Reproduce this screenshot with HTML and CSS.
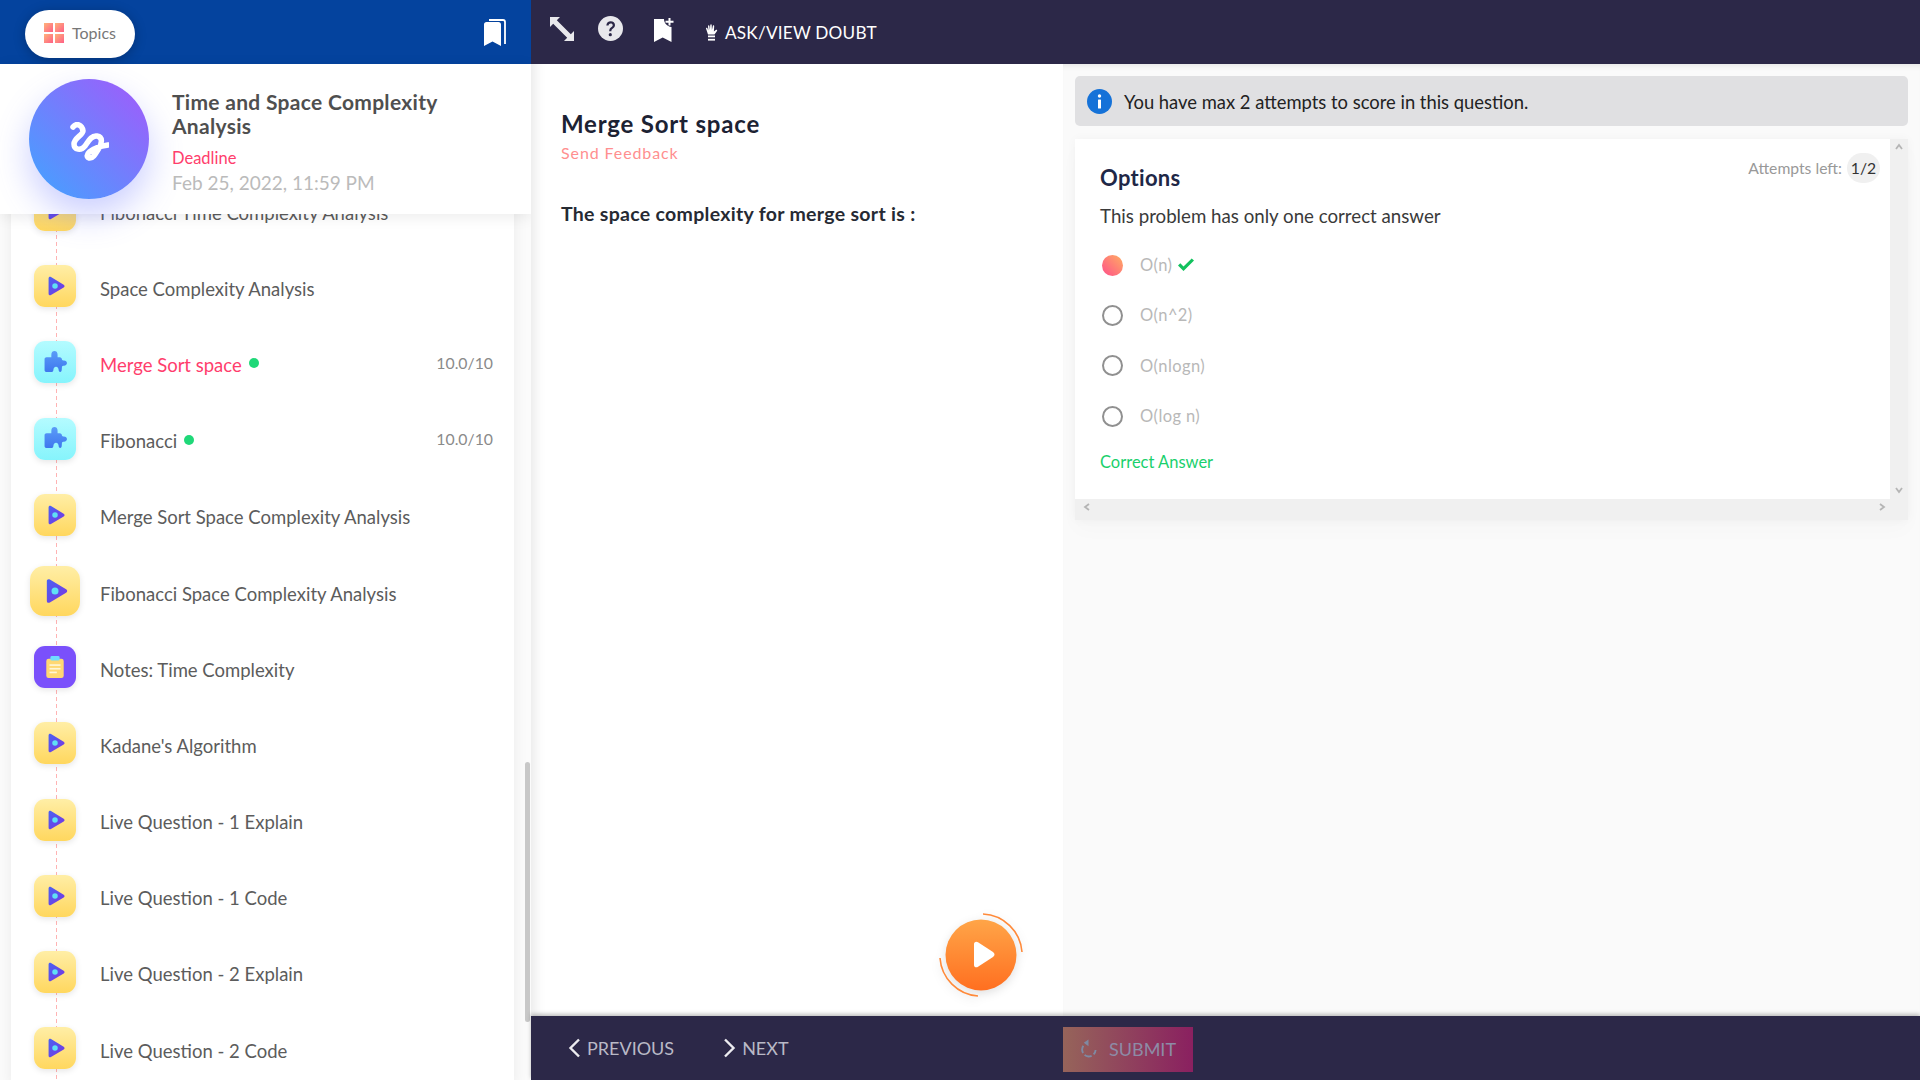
FILE: index.html
```html
<!DOCTYPE html>
<html lang="en">
<head>
<meta charset="UTF-8">
<title>Merge Sort space</title>
<link rel="stylesheet" href="styles.css">
</head>
<body>

<svg class="defs" width="0" height="0">
  <defs>
    <linearGradient id="playFill" x1="0" y1="0" x2="1" y2="1">
      <stop offset="0" stop-color="#4a62f2"/>
      <stop offset="1" stop-color="#7a35e0"/>
    </linearGradient>
    <linearGradient id="puzzleFill" x1="0" y1="0" x2="0" y2="1">
      <stop offset="0" stop-color="#5a9cf8"/>
      <stop offset="1" stop-color="#3f78ee"/>
    </linearGradient>
    <linearGradient id="gridFill" x1="0" y1="0" x2="1" y2="1">
      <stop offset="0" stop-color="#ffb37a"/>
      <stop offset="1" stop-color="#ff5f86"/>
    </linearGradient>
    <symbol id="iconPlay" viewBox="0 0 24 24">
      <path d="M5 3.5 C5 2 6.4 1.4 7.600 2.200 L21.500 10.600 C22.800 11.400 22.800 12.800 21.500 13.600 L7.600 21.800 C6.400 22.600 5 22 5 20.500 Z" fill="url(#playFill)"/>
      <circle cx="12" cy="12" r="3" fill="#5fe0f5"/>
    </symbol>
    <symbol id="iconPuzzle" viewBox="0 0 24 24">
      <path d="M8 4.500 C8 2 9.500 1 11 1 C12.500 1 14 2 14 4.500 L14 7 L16 7 C17.500 7 18 8 18.200 9 C18.500 9.800 19 10 20 10 C22 10 23 11.200 23 12.500 C23 13.800 22 15 20 15 C19 15 18.500 15.200 18.200 16 L18 19 C18 20 17.500 21 16.500 21 C15.500 21 15 20.200 15 19 C15 17.500 14 16 12.500 16 C11 16 10 17.500 10 19 C10 20.200 9.500 21 8.500 21 L3 21 C2 21 1.500 20.300 1.500 19.300 L1.500 9 C1.500 8 2 7 3.500 7 L8 7 Z" fill="url(#puzzleFill)"/>
    </symbol>
    <symbol id="iconNotes" viewBox="0 0 24 24">
      <rect x="2.500" y="3" width="19" height="21" rx="2.500" fill="#ffd873"/>
      <rect x="7" y="0" width="10" height="5" rx="1.500" fill="#6fdcff"/>
      <rect x="6" y="9" width="12" height="1.800" fill="#fff6d8"/>
      <rect x="6" y="13" width="12" height="1.800" fill="#fff6d8"/>
      <rect x="6" y="17" width="8" height="1.800" fill="#fff6d8"/>
    </symbol>
  </defs>
</svg>

<div class="app">

  <aside class="sidebar">
    <div class="sideTop">
      <button class="topicsBtn">
        <svg class="gridIcon" viewBox="0 0 20 20">
          <rect x="0" y="0" width="9" height="9" fill="url(#gridFill)"/>
          <rect x="11" y="0" width="9" height="9" fill="url(#gridFill)"/>
          <rect x="0" y="11" width="9" height="9" fill="url(#gridFill)"/>
          <rect x="11" y="11" width="9" height="9" fill="url(#gridFill)"/>
        </svg>
        Topics
      </button>
      <svg class="bookmarksIcon" viewBox="0 0 22 27">
        <path d="M0 5.500 C0 4 1 3 2.500 3 L14.500 3 C16 3 17 4 17 5.500 L17 27 L8.500 22.500 L0 27 Z" fill="#fff"/>
        <path d="M5 1 L19 1 C20.200 1 21 1.800 21 3 L21 25" fill="none" stroke="#fff" stroke-width="1.800"/>
      </svg>
    </div>

    <div class="courseHead">
      <div class="courseLogo">
        <svg viewBox="0 0 40 40" width="40" height="40">
          <path d="M4 5 C7 1 13 2 14 9 C14 13 5 16 5 22 C5 28 12 29 16 24 C19 20 22 13 28 14 C34 15 33 21 30 26 C27 31 24 37 20 36 C15 34 20 26 39 23" fill="none" stroke="#fff" stroke-width="5.500" stroke-linecap="round" stroke-linejoin="round"/>
        </svg>
      </div>
      <div class="courseInfo">
        <h2>Time and Space Complexity Analysis</h2>
        <div class="deadlineLabel">Deadline</div>
        <div class="deadlineDate">Feb 25, 2022, 11:59 PM</div>
      </div>
    </div>

    <div class="listWrap">
      <ul class="topicList">
        <li class="topic"><span class="tIcon yellow"><svg><use href="#iconPlay"/></svg></span><span class="tName">Fibonacci Time Complexity Analysis</span></li>
        <li class="topic"><span class="tIcon yellow"><svg><use href="#iconPlay"/></svg></span><span class="tName">Space Complexity Analysis</span></li>
        <li class="topic active"><span class="tIcon cyan"><svg><use href="#iconPuzzle"/></svg></span><span class="tName">Merge Sort space</span><i class="doneDot"></i><span class="tScore">10.0/10</span></li>
        <li class="topic"><span class="tIcon cyan"><svg><use href="#iconPuzzle"/></svg></span><span class="tName">Fibonacci</span><i class="doneDot"></i><span class="tScore">10.0/10</span></li>
        <li class="topic"><span class="tIcon yellow"><svg><use href="#iconPlay"/></svg></span><span class="tName">Merge Sort Space Complexity Analysis</span></li>
        <li class="topic"><span class="tIcon yellow big"><svg><use href="#iconPlay"/></svg></span><span class="tName">Fibonacci Space Complexity Analysis</span></li>
        <li class="topic"><span class="tIcon purple"><svg><use href="#iconNotes"/></svg></span><span class="tName">Notes: Time Complexity</span></li>
        <li class="topic"><span class="tIcon yellow"><svg><use href="#iconPlay"/></svg></span><span class="tName">Kadane's Algorithm</span></li>
        <li class="topic"><span class="tIcon yellow"><svg><use href="#iconPlay"/></svg></span><span class="tName">Live Question - 1 Explain</span></li>
        <li class="topic"><span class="tIcon yellow"><svg><use href="#iconPlay"/></svg></span><span class="tName">Live Question - 1 Code</span></li>
        <li class="topic"><span class="tIcon yellow"><svg><use href="#iconPlay"/></svg></span><span class="tName">Live Question - 2 Explain</span></li>
        <li class="topic"><span class="tIcon yellow"><svg><use href="#iconPlay"/></svg></span><span class="tName">Live Question - 2 Code</span></li>
      </ul>
      <div class="listScroll"></div>
    </div>
  </aside>

  <main class="main">
    <header class="topBar">
      <svg class="barIcon expand" viewBox="0 0 24 24">
        <path d="M0 0 L10 0 L6.800 3.200 L20.800 17.200 L24 14 L24 24 L14 24 L17.200 20.800 L3.200 6.800 L0 10 Z" fill="#e8e8ec"/>
      </svg>
      <svg class="barIcon help" viewBox="0 0 25 25">
        <circle cx="12.500" cy="12.500" r="12.500" fill="#e8e8ec"/>
        <path d="M8.300 9.500 C8.500 6.800 10.300 5.300 12.700 5.300 C15.200 5.300 17 6.900 17 9.100 C17 11 15.900 11.900 14.700 12.700 C13.700 13.400 13.400 13.900 13.400 15.300 L11.200 15.300 C11.200 13.200 11.800 12.300 13.200 11.300 C14.200 10.600 14.700 10.100 14.700 9.200 C14.700 8.200 13.900 7.500 12.700 7.500 C11.500 7.500 10.700 8.300 10.500 9.500 Z" fill="#2c2848"/>
        <circle cx="12.300" cy="18.700" r="1.600" fill="#2c2848"/>
      </svg>
      <svg class="barIcon mark" viewBox="0 0 20 24">
        <path d="M0 1 L10 1 C10 5 13 8.500 17.500 9 L17.500 24 L8.700 19.500 L0 24 Z" fill="#fff"/>
        <path d="M16.500 0 L16.500 2.700 L19.500 2.700 L19.500 4.700 L16.500 4.700 L16.500 7.500 L14.500 7.500 L14.500 4.700 L11.500 4.700 L11.500 2.700 L14.500 2.700 L14.500 0 Z" fill="#fff"/>
      </svg>
      <span class="askDoubt">
        <svg class="handIcon" viewBox="0 0 14 17">
          <path d="M2.500 9 L1 4.500 C0.800 3.700 2 3.300 2.300 4.100 L3.300 6.500 L3 2 C3 1.100 4.300 1.100 4.400 2 L4.900 6 L5.300 1 C5.400 0 6.700 0 6.700 1 L6.900 6 L7.900 1.800 C8.100 1 9.300 1.200 9.200 2 L8.900 7.500 L10.800 6 C11.600 5.300 12.700 6.200 12 7 L9.500 10.500 L3 10.500 Z" fill="#fff"/>
          <rect x="3" y="11.500" width="7" height="1.800" fill="#fff"/>
          <rect x="3" y="14.800" width="7" height="1.800" fill="#fff"/>
        </svg>
        ASK/VIEW DOUBT
      </span>
    </header>

    <div class="content">
      <section class="question">
        <h1>Merge Sort space</h1>
        <a class="feedback">Send Feedback</a>
        <p class="qText">The space complexity for merge sort is :</p>
        <div class="playBtn">
          <svg viewBox="0 0 90 90" width="90" height="90">
            <defs>
              <linearGradient id="orangeFill" x1="0" y1="0" x2="0" y2="1">
                <stop offset="0" stop-color="#ffa548"/>
                <stop offset="1" stop-color="#ff6f20"/>
              </linearGradient>
            </defs>
            <circle cx="45" cy="45" r="35.500" fill="url(#orangeFill)"/>
            <path d="M47 4 A41 41 0 0 1 86 42" fill="none" stroke="#ff8a3a" stroke-width="1.600"/>
            <path d="M4 48 A41 41 0 0 0 42 86" fill="none" stroke="#ff8a3a" stroke-width="1.600"/>
            <path d="M38 34 C38 32 40 31 42 32.200 L57 42 C59 43.400 59 45.600 57 47 L42 56.800 C40 58 38 57 38 55 Z" fill="#fff"/>
          </svg>
        </div>
      </section>

      <section class="answer">
        <div class="notice">
          <svg class="infoIcon" viewBox="0 0 25 25">
            <circle cx="12.500" cy="12.500" r="12.500" fill="#1572d8"/>
            <circle cx="12.500" cy="7" r="1.700" fill="#fff"/>
            <rect x="11" y="10.500" width="3" height="9" rx="0.500" fill="#fff"/>
          </svg>
          You have max 2 attempts to score in this question.
        </div>

        <div class="optionsScroll">
          <div class="optionsCard">
            <div class="attempts">Attempts left: <span class="attemptsBadge">1/2</span></div>
            <h3>Options</h3>
            <p class="hint">This problem has only one correct answer</p>
            <div class="option"><i class="radio picked"></i><span>O(n)</span>
              <svg class="tick" viewBox="0 0 18 14"><path d="M1 7.500 L6.500 13 L17 2.500 L14.700 0.500 L6.500 8.500 L3.300 5.300 Z" fill="#12c25e"/></svg>
            </div>
            <div class="option"><i class="radio"></i><span>O(n^2)</span></div>
            <div class="option"><i class="radio"></i><span>O(nlogn)</span></div>
            <div class="option"><i class="radio"></i><span>O(log n)</span></div>
            <div class="verdict">Correct Answer</div>
          </div>
          <svg class="arrow up" viewBox="0 0 8 6"><path d="M1 5 L4 1 L7 5" fill="none" stroke="#b5b5b5" stroke-width="1.800"/></svg>
          <svg class="arrow down" viewBox="0 0 8 6"><path d="M1 1 L4 5 L7 1" fill="none" stroke="#b5b5b5" stroke-width="1.800"/></svg>
          <svg class="arrow left" viewBox="0 0 6 8"><path d="M5 1 L1 4 L5 7" fill="none" stroke="#b5b5b5" stroke-width="1.800"/></svg>
          <svg class="arrow right" viewBox="0 0 6 8"><path d="M1 1 L5 4 L1 7" fill="none" stroke="#b5b5b5" stroke-width="1.800"/></svg>
        </div>
      </section>
    </div>

    <footer class="bottomBar">
      <div class="navBtns">
        <a class="navBtn">
          <svg viewBox="0 0 13 20" width="13" height="20"><path d="M11 1.500 L2.500 10 L11 18.500" fill="none" stroke="#ececf0" stroke-width="2.400"/></svg>
          PREVIOUS
        </a>
        <a class="navBtn">
          <svg viewBox="0 0 13 20" width="13" height="20"><path d="M2 1.500 L10.500 10 L2 18.500" fill="none" stroke="#ececf0" stroke-width="2.400"/></svg>
          NEXT
        </a>
      </div>
      <button class="submitBtn">
        <svg viewBox="0 0 18 20" width="17" height="20">
          <path d="M3.500 6.500 A7.500 7.500 0 0 0 9 18 A7.500 7.500 0 0 0 16.500 11" fill="none" stroke="#7f8aa3" stroke-width="2" stroke-dasharray="8 2.500"/>
          <path d="M9 0 L9 7 L4 3.500 Z" fill="#7f8aa3"/>
        </svg>
        SUBMIT
      </button>
    </footer>
  </main>

</div>
</body>
</html>
```

FILE: styles.css
```css
* {
  box-sizing: border-box;
}
html, body {
  height: 100%;
  margin: 0;
  overflow: hidden;
}
body {
  font-family: "Lato", "Noto Sans", sans-serif;
  background-color: #fff;
  color: #333;
}
.defs {
  display: block;
  height: 0;
}
.app {
  display: grid;
  grid-template-columns: 531px 1fr;
  height: 1080px;
}

/* sidebar */
.sidebar {
  display: flex;
  flex-direction: column;
  height: 1080px;
  overflow: hidden;
}
.sideTop {
  flex: none;
  height: 64px;
  display: flex;
  align-items: center;
  justify-content: space-between;
  padding: 0 25px;
  background-color: #04439e;
}
.topicsBtn {
  display: flex;
  align-items: center;
  gap: 8px;
  width: 110px;
  height: 48px;
  margin-top: 4px;
  padding: 0 0 3px 19px;
  border: none;
  border-radius: 24px;
  background-color: #fff;
  font: 16px "Lato", sans-serif;
  color: #777;
  box-shadow: 0 2px 12px rgba(0, 0, 0, .25);
}
.gridIcon {
  width: 20px;
  height: 20px;
}
.bookmarksIcon {
  width: 22px;
  height: 27px;
}
.courseHead {
  position: relative;
  z-index: 2;
  flex: none;
  height: 150px;
  display: flex;
  align-items: center;
  gap: 23px;
  padding-left: 29px;
  background-color: #fff;
  box-shadow: 0 3px 14px rgba(0, 0, 0, .08);
}
.courseLogo {
  flex: none;
  width: 120px;
  height: 120px;
  display: flex;
  align-items: center;
  justify-content: center;
  border-radius: 50%;
  background: linear-gradient(45deg, #4a9dff 10%, #9a60fb 90%);
  box-shadow: 0 16px 34px rgba(96, 110, 255, .33);
}
.courseLogo svg {
  margin-top: 6px;
}
.courseInfo {
  width: 300px;
  padding-top: 7px;
}
.courseInfo h2 {
  margin: 0;
  font-size: 21px;
  line-height: 24px;
  font-weight: 700;
  letter-spacing: .3px;
  color: #4f4f4f;
}
.deadlineLabel {
  margin-top: 10px;
  font-size: 16.500px;
  line-height: 20px;
  color: #ff3d6c;
}
.deadlineDate {
  margin-top: 3px;
  font-size: 19px;
  line-height: 24px;
  color: #bbb;
}
.listWrap {
  position: relative;
  flex: 1;
  min-height: 0;
  overflow: hidden;
  background-color: #fbfbfb;
}
.topicList {
  list-style: none;
  width: 503px;
  margin: -42px 0 0 11px;
  padding: 0;
  background-color: #fff;
  background-image: repeating-linear-gradient(#ffb3b3 0 4px, transparent 4px 7px);
  background-size: 1px 100%;
  background-position: 45px 0;
  background-repeat: no-repeat;
  box-shadow: 0 0 14px rgba(0, 0, 0, .07);
}
.topic {
  height: 76.2px;
  display: flex;
  align-items: center;
}
.tIcon {
  flex: none;
  width: 42px;
  height: 42px;
  margin-left: 23px;
  margin-right: 24px;
  display: flex;
  align-items: center;
  justify-content: center;
  border-radius: 11px;
  box-shadow: 0 2px 6px rgba(0, 0, 0, .1);
}
.tIcon svg {
  width: 22px;
  height: 22px;
}
.tIcon.big {
  width: 50px;
  height: 50px;
  margin-left: 19px;
  margin-right: 20px;
  border-radius: 14px;
}
.tIcon.big svg {
  width: 28px;
  height: 28px;
}
.tIcon.yellow {
  background: linear-gradient(#ffeea6, #ffd75e);
}
.tIcon.cyan {
  background: linear-gradient(#b4fbff, #86f4fc);
}
.tIcon.cyan svg {
  width: 25px;
  height: 25px;
}
.tIcon.purple {
  background-color: #7a50fb;
}
.tName {
  padding-top: 5px;
  font-size: 18.500px;
  color: #5c5c5c;
}
.topic.active .tName {
  color: #ff3d6c;
}
.doneDot {
  width: 10px;
  height: 10px;
  margin-left: 7px;
  margin-top: 2px;
  border-radius: 50%;
  background-color: #1fd878;
}
.tScore {
  margin-left: auto;
  margin-right: 21px;
  font-size: 15.800px;
  color: #8a8a8a;
}
.listScroll {
  position: absolute;
  right: 1px;
  top: 548px;
  width: 5px;
  height: 260px;
  border-radius: 3px;
  background-color: #c8c8c8;
}

/* main part */
.main {
  display: flex;
  flex-direction: column;
  height: 1080px;
}
.topBar {
  flex: none;
  height: 64px;
  display: flex;
  align-items: center;
  padding-left: 19px;
  background-color: #2c2848;
}
.barIcon {
  flex: none;
}
.barIcon.expand {
  width: 24px;
  height: 24px;
  margin-right: 24px;
  margin-top: -6px;
}
.barIcon.help {
  width: 25px;
  height: 25px;
  margin-right: 31px;
  margin-top: -7px;
}
.barIcon.mark {
  width: 20px;
  height: 24px;
  margin-right: 31px;
  margin-top: -5px;
}
.askDoubt {
  display: flex;
  align-items: center;
  gap: 6px;
  font-size: 17.200px;
  letter-spacing: .2px;
  color: #fff;
}
.handIcon {
  width: 14px;
  height: 17px;
}
.content {
  flex: 1;
  min-height: 0;
  display: grid;
  grid-template-columns: 532px 1fr;
}
.question {
  position: relative;
  padding: 46px 30px 0;
  background-color: #fff;
  box-shadow: inset 14px 0 12px -10px rgba(0, 0, 0, .09);
}
.question h1 {
  margin: 0;
  font-size: 24px;
  line-height: 28px;
  font-weight: 700;
  letter-spacing: .8px;
  color: #1c2233;
}
.feedback {
  display: block;
  margin-top: 5px;
  font-size: 16px;
  line-height: 20px;
  letter-spacing: .9px;
  color: #ff8f8f;
}
.qText {
  margin: 39px 0 0;
  font-size: 19.500px;
  line-height: 24px;
  font-weight: 700;
  letter-spacing: .3px;
  color: #262a33;
}
.playBtn {
  position: absolute;
  left: 405px;
  top: 846px;
  width: 90px;
  height: 90px;
  filter: drop-shadow(0 3px 5px rgba(0, 0, 0, .12));
}
.answer {
  padding: 12px 12px 0;
  background-color: #fafafa;
  box-shadow: inset 0 6px 6px -5px rgba(0, 0, 0, .1);
}
.notice {
  height: 50px;
  display: flex;
  align-items: center;
  gap: 12px;
  padding-left: 12px;
  padding-top: 1px;
  border-radius: 5px;
  background-color: #e0e0e2;
  font-size: 18.400px;
  color: #222;
}
.infoIcon {
  width: 25px;
  height: 25px;
  margin-top: -1px;
}
.optionsScroll {
  position: relative;
  margin-top: 13px;
  padding: 0 18px 21px 0;
  background-color: #f0f0f0;
  box-shadow: 0 0 10px rgba(0, 0, 0, .035), 0 10px 20px rgba(0, 0, 0, .02);
}
.optionsCard {
  position: relative;
  height: 360px;
  padding: 25px 25px 0;
  background-color: #fff;
}
.optionsCard h3 {
  margin: 0;
  font-size: 22px;
  line-height: 28px;
  font-weight: 700;
  letter-spacing: .3px;
  color: #1f2847;
}
.attempts {
  position: absolute;
  right: 10px;
  top: 14px;
  display: flex;
  align-items: center;
  gap: 5px;
  font-size: 15.700px;
  color: #999;
}
.attemptsBadge {
  width: 33px;
  height: 30px;
  display: flex;
  align-items: center;
  justify-content: center;
  border-radius: 15px;
  background-color: #f0f0f0;
  color: #333;
}
.hint {
  margin: 12px 0 12px;
  font-size: 18.700px;
  line-height: 24px;
  color: #3a3a3a;
}
.option {
  height: 50.300px;
  display: flex;
  align-items: center;
  padding-left: 2px;
  font-size: 16.500px;
  letter-spacing: .4px;
  color: #b8b8b8;
}
.radio {
  flex: none;
  width: 21px;
  height: 21px;
  margin-right: 17px;
  border: 2px solid #909090;
  border-radius: 50%;
}
.radio.picked {
  border: none;
  background: linear-gradient(45deg, #ff4f8a, #ffae62);
}
.tick {
  width: 18px;
  height: 14px;
  margin-left: 5px;
}
.verdict {
  margin-top: 11px;
  font-size: 16.500px;
  color: #19d06c;
}
.arrow {
  position: absolute;
  width: 8px;
  height: 8px;
}
.arrow.up {
  right: 5px;
  top: 4px;
}
.arrow.down {
  right: 5px;
  top: 347px;
}
.arrow.left {
  left: 8px;
  bottom: 9px;
}
.arrow.right {
  right: 22px;
  bottom: 9px;
}
.bottomBar {
  flex: none;
  height: 64px;
  display: grid;
  grid-template-columns: 532px 1fr;
  align-items: center;
  background-color: #2c2848;
  box-shadow: 0 -2px 4px rgba(0, 0, 0, .25);
  position: relative;
}
.navBtns {
  display: flex;
  align-items: center;
  gap: 49px;
  padding-left: 37px;
}
.navBtn {
  display: flex;
  align-items: center;
  gap: 6px;
  font-size: 18px;
  color: #b9b9c6;
}
.submitBtn {
  width: 130px;
  height: 45px;
  margin-top: 2px;
  display: flex;
  align-items: center;
  gap: 12px;
  padding: 0 0 0 17px;
  border: none;
  background: linear-gradient(90deg, #96645a, #8a2060);
  font: 18px "Lato", sans-serif;
  color: #8d8ba6;
}
```
